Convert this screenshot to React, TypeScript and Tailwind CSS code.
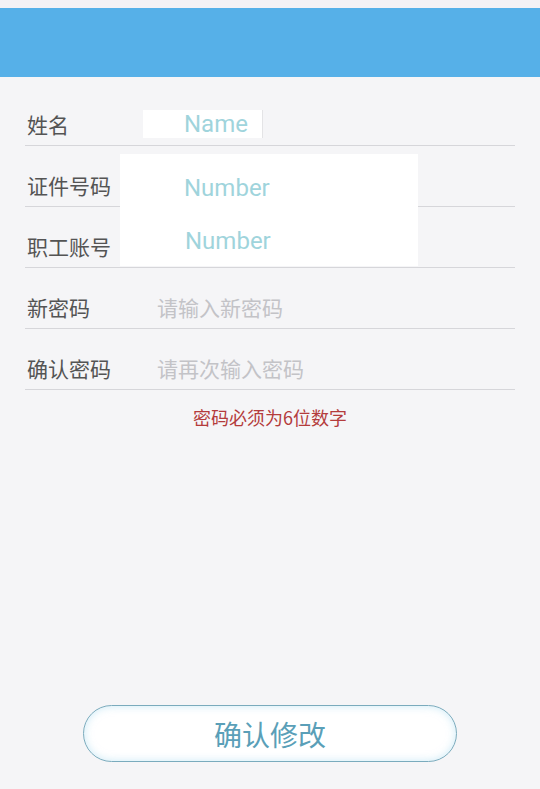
const rows = [
  { label: '姓名', placeholder: '' },
  { label: '证件号码', placeholder: '' },
  { label: '职工账号', placeholder: '' },
  { label: '新密码', placeholder: '请输入新密码' },
  { label: '确认密码', placeholder: '请再次输入密码' },
];

export default function App() {
  return (
    <div className="min-h-[789px] flex flex-col bg-[#f5f5f7] font-['Noto_Sans_CJK_SC','Noto_Sans',sans-serif]">
      <div className="h-[8px] bg-[#f4f2f5]" />
      <div className="h-[69px] bg-[#56b0e8]" />

      <div className="relative px-[25px] pt-[8px]">
        {rows.map((row) => (
          <div key={row.label} className="h-[61px] flex items-end pb-[9px] pl-[2px] border-b border-[#d6d6da]">
            <span className="w-[130px] text-[21px] leading-[24px] text-[#545454]">{row.label}</span>
            <span className="text-[21px] leading-[24px] text-[#c3c3c7]">{row.placeholder}</span>
          </div>
        ))}

        {/* redaction patches */}
        <div className="absolute left-[143px] top-[33px] w-[120px] h-[28px] bg-white border-r border-[#e4e4e6]">
          <span className="absolute left-[41px] top-[1px] text-[24px] leading-[26px] text-[#9fd4dc] font-['Roboto',sans-serif]">Name</span>
        </div>
        <div className="absolute left-[120px] top-[77px] w-[298px] h-[112px] bg-white">
          <span className="absolute left-[64px] top-[21px] text-[24px] leading-[26px] text-[#9fd4dc] font-['Roboto',sans-serif]">Number</span>
          <span className="absolute left-[65px] top-[74px] text-[24px] leading-[26px] text-[#9fd4dc] font-['Roboto',sans-serif]">Number</span>
        </div>
      </div>

      <p className="mt-[15px] text-center text-[18px] leading-[24px] text-[#b43c3c]">密码必须为6位数字</p>

      <div className="flex-1" />

      <div className="mx-[83px] mb-[27px] h-[57px] rounded-full border-[1.5px] border-[#7aabbd] bg-white shadow-[inset_0_0_8px_rgba(160,215,238,0.55)] flex items-center justify-center">
        <span className="text-[28px] leading-[32px] text-[#5a9fb8]">确认修改</span>
      </div>
    </div>
  );
}
